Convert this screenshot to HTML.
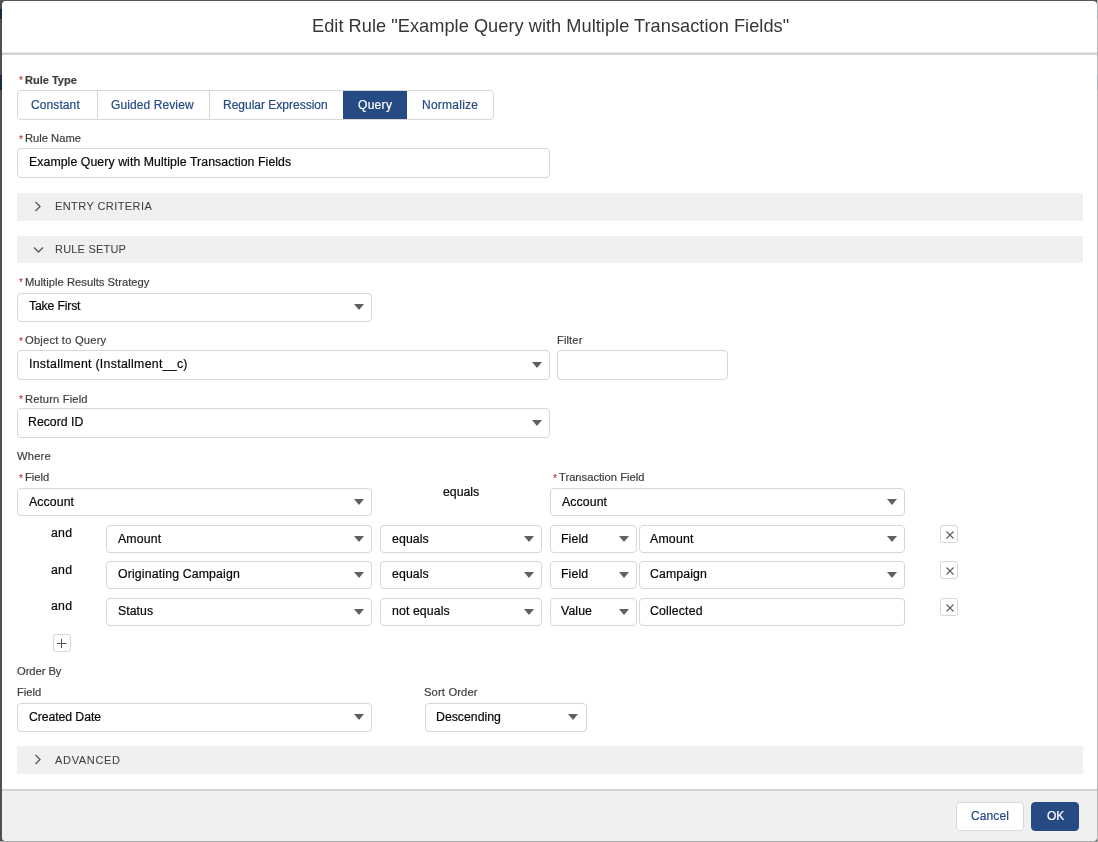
<!DOCTYPE html>
<html><head><meta charset="utf-8"><style>
html,body{margin:0;padding:0;width:1098px;height:842px;overflow:hidden;background:#555}
body{position:relative;font-family:"Liberation Sans",sans-serif}
.t{position:absolute;white-space:nowrap;line-height:1;will-change:transform;-webkit-text-stroke:0.2px currentColor}
</style></head><body>
<div style="position:absolute;left:0px;top:0px;width:1098px;height:842px;background:#555"></div>
<div style="position:absolute;left:0px;top:0px;width:2px;height:842px;background:#4f4f4f"></div>
<div style="position:absolute;left:0px;top:9px;width:2px;height:10px;background:#1c2b47"></div>
<div style="position:absolute;left:0px;top:75px;width:2px;height:15px;background:#1c2b47"></div>
<div style="position:absolute;left:1097px;top:0;width:1px;height:842px;background:#b9b9b9"></div>
<div style="position:absolute;left:1097px;top:9px;width:1px;height:10px;background:#a9b3c6"></div>
<div style="position:absolute;left:1097px;top:75px;width:1px;height:15px;background:#a9b3c6"></div>
<div style="position:absolute;left:0;top:841px;width:1098px;height:1px;background:#aaa"></div>
<div style="position:absolute;left:2px;top:1px;width:1095px;height:840px;background:#fff;border-radius:4px;overflow:hidden"><div style="position:absolute;left:0;top:51px;width:100%;height:1px;background:#e6e5e4"></div><div style="position:absolute;left:0;top:52px;width:100%;height:2px;background:#d6d4d2"></div><div style="position:absolute;left:0;top:788px;width:100%;height:52px;background:#f0f0f0;border-top:2px solid #d5d3d1;box-sizing:border-box"></div></div>
<div class="t" style="left:311.50px;top:16.89px;font-size:18.2px;color:#383634;font-weight:400;letter-spacing:0.04px;-webkit-text-stroke:0">Edit Rule "Example Query with Multiple Transaction Fields"</div>
<div class="t" style="left:18.90px;top:76.34px;font-size:10px;color:#b8302b;font-weight:400;letter-spacing:0px;-webkit-text-stroke:0.1px currentColor">*</div>
<div class="t" style="left:24.80px;top:75.09px;font-size:11px;color:#3e3e3c;font-weight:700;letter-spacing:0px;">Rule Type</div>
<div style="position:absolute;left:17px;top:90px;width:477px;height:30px;box-sizing:border-box;border:1px solid #d9d7d5;background:#fff;border-radius:4px;"></div>
<div style="position:absolute;left:343px;top:91px;width:64px;height:28px;background:#264b84"></div>
<div style="position:absolute;left:97px;top:91px;width:1px;height:28px;background:#d9d7d5"></div>
<div style="position:absolute;left:209px;top:91px;width:1px;height:28px;background:#d9d7d5"></div>
<div class="t" style="left:30.80px;top:98.84px;font-size:12px;color:#264b84;font-weight:400;letter-spacing:0.1px;">Constant</div>
<div class="t" style="left:110.70px;top:98.84px;font-size:12px;color:#264b84;font-weight:400;letter-spacing:0.1px;">Guided Review</div>
<div class="t" style="left:223.30px;top:98.84px;font-size:12px;color:#264b84;font-weight:400;letter-spacing:0px;">Regular Expression</div>
<div class="t" style="left:357.60px;top:98.84px;font-size:12px;color:#fff;font-weight:400;letter-spacing:0.3px;">Query</div>
<div class="t" style="left:421.50px;top:98.84px;font-size:12px;color:#264b84;font-weight:400;letter-spacing:0.25px;">Normalize</div>
<div class="t" style="left:18.90px;top:134.84px;font-size:10px;color:#b8302b;font-weight:400;letter-spacing:0px;-webkit-text-stroke:0.1px currentColor">*</div>
<div class="t" style="left:24.80px;top:133.42px;font-size:11.2px;color:#3e3e3c;font-weight:400;letter-spacing:0px;">Rule Name</div>
<div style="position:absolute;left:17px;top:148px;width:533px;height:30px;box-sizing:border-box;border:1px solid #d9d7d5;background:#fff;border-radius:4px;"></div>
<div class="t" style="left:29.00px;top:156.39px;font-size:12.3px;color:#080707;font-weight:400;letter-spacing:0.07px;">Example Query with Multiple Transaction Fields</div>
<div style="position:absolute;left:17px;top:193px;width:1066px;height:28px;background:#f0f0f0"></div>
<svg style="position:absolute;left:34px;top:201.0px" width="8" height="11" viewBox="0 0 8 11"><path d="M1.5 1L6 5.5L1.5 10" fill="none" stroke="#5c5c5c" stroke-width="1.4"/></svg>
<div class="t" style="left:54.80px;top:201.09px;font-size:11px;color:#3e3e3c;font-weight:400;letter-spacing:0.42px;-webkit-text-stroke:0.05px currentColor">ENTRY CRITERIA</div>
<div style="position:absolute;left:17px;top:236px;width:1066px;height:27px;background:#f0f0f0"></div>
<svg style="position:absolute;left:33px;top:245.5px" width="11" height="8" viewBox="0 0 11 8"><path d="M1 1.5L5.5 6L10 1.5" fill="none" stroke="#5c5c5c" stroke-width="1.4"/></svg>
<div class="t" style="left:54.80px;top:243.89px;font-size:11px;color:#3e3e3c;font-weight:400;letter-spacing:0.2px;-webkit-text-stroke:0.05px currentColor">RULE SETUP</div>
<div class="t" style="left:18.80px;top:278.04px;font-size:10px;color:#b8302b;font-weight:400;letter-spacing:0px;-webkit-text-stroke:0.1px currentColor">*</div>
<div class="t" style="left:24.70px;top:276.62px;font-size:11.2px;color:#3e3e3c;font-weight:400;letter-spacing:0.03px;">Multiple Results Strategy</div>
<div style="position:absolute;left:17px;top:293px;width:355px;height:29px;box-sizing:border-box;border:1px solid #d9d7d5;background:#fff;border-radius:4px;"></div>
<div class="t" style="left:28.60px;top:299.99px;font-size:12.3px;color:#080707;font-weight:400;letter-spacing:-0.2px;">Take First</div>
<svg style="position:absolute;left:353.6px;top:304.0px" width="10" height="6" viewBox="0 0 10 6"><path d="M0 0H10L5.0 6Z" fill="#606060"/></svg>
<div class="t" style="left:18.70px;top:336.54px;font-size:10px;color:#b8302b;font-weight:400;letter-spacing:0px;-webkit-text-stroke:0.1px currentColor">*</div>
<div class="t" style="left:24.60px;top:335.12px;font-size:11.2px;color:#3e3e3c;font-weight:400;letter-spacing:0.2px;">Object to Query</div>
<div style="position:absolute;left:17px;top:350px;width:533px;height:30px;box-sizing:border-box;border:1px solid #d9d7d5;background:#fff;border-radius:4px;"></div>
<div class="t" style="left:28.50px;top:357.89px;font-size:12.3px;color:#080707;font-weight:400;letter-spacing:0.3px;">Installment (Installment__c)</div>
<svg style="position:absolute;left:531.6px;top:361.5px" width="10" height="6" viewBox="0 0 10 6"><path d="M0 0H10L5.0 6Z" fill="#606060"/></svg>
<div class="t" style="left:557.00px;top:335.12px;font-size:11.2px;color:#3e3e3c;font-weight:400;letter-spacing:0.1px;">Filter</div>
<div style="position:absolute;left:557px;top:350px;width:171px;height:30px;box-sizing:border-box;border:1px solid #d9d7d5;background:#fff;border-radius:4px;"></div>
<div class="t" style="left:18.70px;top:395.04px;font-size:10px;color:#b8302b;font-weight:400;letter-spacing:0px;-webkit-text-stroke:0.1px currentColor">*</div>
<div class="t" style="left:24.60px;top:393.62px;font-size:11.2px;color:#3e3e3c;font-weight:400;letter-spacing:0.15px;">Return Field</div>
<div style="position:absolute;left:17px;top:408px;width:533px;height:30px;box-sizing:border-box;border:1px solid #d9d7d5;background:#fff;border-radius:4px;"></div>
<div class="t" style="left:27.80px;top:416.39px;font-size:12.3px;color:#080707;font-weight:400;letter-spacing:0px;">Record ID</div>
<svg style="position:absolute;left:531.6px;top:419.5px" width="10" height="6" viewBox="0 0 10 6"><path d="M0 0H10L5.0 6Z" fill="#606060"/></svg>
<div class="t" style="left:17.00px;top:450.82px;font-size:11.2px;color:#3e3e3c;font-weight:400;letter-spacing:0.2px;">Where</div>
<div class="t" style="left:18.70px;top:473.54px;font-size:10px;color:#b8302b;font-weight:400;letter-spacing:0px;-webkit-text-stroke:0.1px currentColor">*</div>
<div class="t" style="left:24.60px;top:472.12px;font-size:11.2px;color:#3e3e3c;font-weight:400;letter-spacing:0px;">Field</div>
<div style="position:absolute;left:17px;top:488px;width:355px;height:28px;box-sizing:border-box;border:1px solid #d9d7d5;background:#fff;border-radius:4px;"></div>
<div class="t" style="left:28.70px;top:495.89px;font-size:12.3px;color:#080707;font-weight:400;letter-spacing:0.1px;">Account</div>
<svg style="position:absolute;left:353.6px;top:498.5px" width="10" height="6" viewBox="0 0 10 6"><path d="M0 0H10L5.0 6Z" fill="#606060"/></svg>
<div class="t" style="left:443.00px;top:485.79px;font-size:12.3px;color:#080707;font-weight:400;letter-spacing:0px;">equals</div>
<div class="t" style="left:552.60px;top:473.63px;font-size:10px;color:#b8302b;font-weight:400;letter-spacing:0px;-webkit-text-stroke:0.1px currentColor">*</div>
<div class="t" style="left:558.50px;top:472.22px;font-size:11.2px;color:#3e3e3c;font-weight:400;letter-spacing:0px;">Transaction Field</div>
<div style="position:absolute;left:550px;top:488px;width:355px;height:28px;box-sizing:border-box;border:1px solid #d9d7d5;background:#fff;border-radius:4px;"></div>
<div class="t" style="left:561.70px;top:495.89px;font-size:12.3px;color:#080707;font-weight:400;letter-spacing:0.1px;">Account</div>
<svg style="position:absolute;left:886.6px;top:498.5px" width="10" height="6" viewBox="0 0 10 6"><path d="M0 0H10L5.0 6Z" fill="#606060"/></svg>
<div class="t" style="left:50.70px;top:527.19px;font-size:12.3px;color:#080707;font-weight:400;letter-spacing:0.25px;">and</div>
<div style="position:absolute;left:106px;top:525px;width:266px;height:28px;box-sizing:border-box;border:1px solid #d9d7d5;background:#fff;border-radius:4px;"></div>
<div class="t" style="left:117.70px;top:532.79px;font-size:12.3px;color:#080707;font-weight:400;letter-spacing:0.15px;">Amount</div>
<svg style="position:absolute;left:353.6px;top:535.5px" width="10" height="6" viewBox="0 0 10 6"><path d="M0 0H10L5.0 6Z" fill="#606060"/></svg>
<div style="position:absolute;left:380px;top:525px;width:162px;height:28px;box-sizing:border-box;border:1px solid #d9d7d5;background:#fff;border-radius:4px;"></div>
<div class="t" style="left:391.50px;top:532.79px;font-size:12.3px;color:#080707;font-weight:400;letter-spacing:0.1px;">equals</div>
<svg style="position:absolute;left:523.6px;top:535.5px" width="10" height="6" viewBox="0 0 10 6"><path d="M0 0H10L5.0 6Z" fill="#606060"/></svg>
<div style="position:absolute;left:550px;top:525px;width:87px;height:28px;box-sizing:border-box;border:1px solid #d9d7d5;background:#fff;border-radius:4px;"></div>
<div class="t" style="left:561.30px;top:532.79px;font-size:12.3px;color:#080707;font-weight:400;letter-spacing:0.1px;">Field</div>
<svg style="position:absolute;left:618.6px;top:535.5px" width="10" height="6" viewBox="0 0 10 6"><path d="M0 0H10L5.0 6Z" fill="#606060"/></svg>
<div style="position:absolute;left:639px;top:525px;width:266px;height:28px;box-sizing:border-box;border:1px solid #d9d7d5;background:#fff;border-radius:4px;"></div>
<div class="t" style="left:650.00px;top:532.79px;font-size:12.3px;color:#080707;font-weight:400;letter-spacing:0.2px;">Amount</div>
<svg style="position:absolute;left:886.6px;top:535.5px" width="10" height="6" viewBox="0 0 10 6"><path d="M0 0H10L5.0 6Z" fill="#606060"/></svg>
<div style="position:absolute;left:940px;top:525px;width:18px;height:18px;box-sizing:border-box;border:1px solid #d9d7d5;background:#fff;border-radius:3px;"></div>
<svg style="position:absolute;left:945.8px;top:530.6px" width="8" height="8" viewBox="0 0 8 8"><path d="M0.5 0.5L7.5 7.5M7.5 0.5L0.5 7.5" stroke="#5a5a5a" stroke-width="1.1"/></svg>
<div class="t" style="left:50.70px;top:563.59px;font-size:12.3px;color:#080707;font-weight:400;letter-spacing:0.25px;">and</div>
<div style="position:absolute;left:106px;top:561px;width:266px;height:28px;box-sizing:border-box;border:1px solid #d9d7d5;background:#fff;border-radius:4px;"></div>
<div class="t" style="left:117.70px;top:568.09px;font-size:12.3px;color:#080707;font-weight:400;letter-spacing:0.15px;">Originating Campaign</div>
<svg style="position:absolute;left:353.6px;top:571.5px" width="10" height="6" viewBox="0 0 10 6"><path d="M0 0H10L5.0 6Z" fill="#606060"/></svg>
<div style="position:absolute;left:380px;top:561px;width:162px;height:28px;box-sizing:border-box;border:1px solid #d9d7d5;background:#fff;border-radius:4px;"></div>
<div class="t" style="left:391.50px;top:568.09px;font-size:12.3px;color:#080707;font-weight:400;letter-spacing:0.1px;">equals</div>
<svg style="position:absolute;left:523.6px;top:571.5px" width="10" height="6" viewBox="0 0 10 6"><path d="M0 0H10L5.0 6Z" fill="#606060"/></svg>
<div style="position:absolute;left:550px;top:561px;width:87px;height:28px;box-sizing:border-box;border:1px solid #d9d7d5;background:#fff;border-radius:4px;"></div>
<div class="t" style="left:561.30px;top:568.09px;font-size:12.3px;color:#080707;font-weight:400;letter-spacing:0.1px;">Field</div>
<svg style="position:absolute;left:618.6px;top:571.5px" width="10" height="6" viewBox="0 0 10 6"><path d="M0 0H10L5.0 6Z" fill="#606060"/></svg>
<div style="position:absolute;left:639px;top:561px;width:266px;height:28px;box-sizing:border-box;border:1px solid #d9d7d5;background:#fff;border-radius:4px;"></div>
<div class="t" style="left:650.00px;top:568.09px;font-size:12.3px;color:#080707;font-weight:400;letter-spacing:0.1px;">Campaign</div>
<svg style="position:absolute;left:886.6px;top:571.5px" width="10" height="6" viewBox="0 0 10 6"><path d="M0 0H10L5.0 6Z" fill="#606060"/></svg>
<div style="position:absolute;left:940px;top:561px;width:18px;height:18px;box-sizing:border-box;border:1px solid #d9d7d5;background:#fff;border-radius:3px;"></div>
<svg style="position:absolute;left:945.8px;top:566.6px" width="8" height="8" viewBox="0 0 8 8"><path d="M0.5 0.5L7.5 7.5M7.5 0.5L0.5 7.5" stroke="#5a5a5a" stroke-width="1.1"/></svg>
<div class="t" style="left:50.70px;top:599.89px;font-size:12.3px;color:#080707;font-weight:400;letter-spacing:0.25px;">and</div>
<div style="position:absolute;left:106px;top:598px;width:266px;height:28px;box-sizing:border-box;border:1px solid #d9d7d5;background:#fff;border-radius:4px;"></div>
<div class="t" style="left:117.70px;top:604.89px;font-size:12.3px;color:#080707;font-weight:400;letter-spacing:0.05px;">Status</div>
<svg style="position:absolute;left:353.6px;top:608.5px" width="10" height="6" viewBox="0 0 10 6"><path d="M0 0H10L5.0 6Z" fill="#606060"/></svg>
<div style="position:absolute;left:380px;top:598px;width:162px;height:28px;box-sizing:border-box;border:1px solid #d9d7d5;background:#fff;border-radius:4px;"></div>
<div class="t" style="left:391.50px;top:604.89px;font-size:12.3px;color:#080707;font-weight:400;letter-spacing:0.1px;">not equals</div>
<svg style="position:absolute;left:523.6px;top:608.5px" width="10" height="6" viewBox="0 0 10 6"><path d="M0 0H10L5.0 6Z" fill="#606060"/></svg>
<div style="position:absolute;left:550px;top:598px;width:87px;height:28px;box-sizing:border-box;border:1px solid #d9d7d5;background:#fff;border-radius:4px;"></div>
<div class="t" style="left:561.30px;top:604.89px;font-size:12.3px;color:#080707;font-weight:400;letter-spacing:0.1px;">Value</div>
<svg style="position:absolute;left:618.6px;top:608.5px" width="10" height="6" viewBox="0 0 10 6"><path d="M0 0H10L5.0 6Z" fill="#606060"/></svg>
<div style="position:absolute;left:639px;top:598px;width:266px;height:28px;box-sizing:border-box;border:1px solid #d9d7d5;background:#fff;border-radius:4px;"></div>
<div class="t" style="left:650.00px;top:604.89px;font-size:12.3px;color:#080707;font-weight:400;letter-spacing:0.15px;">Collected</div>
<div style="position:absolute;left:940px;top:598px;width:18px;height:18px;box-sizing:border-box;border:1px solid #d9d7d5;background:#fff;border-radius:3px;"></div>
<svg style="position:absolute;left:945.8px;top:603.6px" width="8" height="8" viewBox="0 0 8 8"><path d="M0.5 0.5L7.5 7.5M7.5 0.5L0.5 7.5" stroke="#5a5a5a" stroke-width="1.1"/></svg>
<div style="position:absolute;left:53px;top:634px;width:18px;height:18px;box-sizing:border-box;border:1px solid #d9d7d5;background:#fff;border-radius:3px;"></div>
<svg style="position:absolute;left:57px;top:639px" width="10" height="10" viewBox="0 0 10 10"><path d="M4.5 0V9.2M0 4.5H9.5" stroke="#505050" stroke-width="1"/></svg>
<div class="t" style="left:17.00px;top:666.32px;font-size:11.2px;color:#3e3e3c;font-weight:400;letter-spacing:-0.05px;">Order By</div>
<div class="t" style="left:17.00px;top:686.92px;font-size:11.2px;color:#3e3e3c;font-weight:400;letter-spacing:0px;">Field</div>
<div style="position:absolute;left:17px;top:703px;width:355px;height:29px;box-sizing:border-box;border:1px solid #d9d7d5;background:#fff;border-radius:4px;"></div>
<div class="t" style="left:28.60px;top:710.79px;font-size:12.3px;color:#080707;font-weight:400;letter-spacing:-0.1px;">Created Date</div>
<svg style="position:absolute;left:353.6px;top:714.0px" width="10" height="6" viewBox="0 0 10 6"><path d="M0 0H10L5.0 6Z" fill="#606060"/></svg>
<div class="t" style="left:424.00px;top:686.92px;font-size:11.2px;color:#3e3e3c;font-weight:400;letter-spacing:0.15px;">Sort Order</div>
<div style="position:absolute;left:425px;top:703px;width:162px;height:29px;box-sizing:border-box;border:1px solid #d9d7d5;background:#fff;border-radius:4px;"></div>
<div class="t" style="left:436.00px;top:710.79px;font-size:12.3px;color:#080707;font-weight:400;letter-spacing:0px;">Descending</div>
<svg style="position:absolute;left:567.6px;top:714.0px" width="10" height="6" viewBox="0 0 10 6"><path d="M0 0H10L5.0 6Z" fill="#606060"/></svg>
<div style="position:absolute;left:17px;top:746px;width:1066px;height:28px;background:#f0f0f0"></div>
<svg style="position:absolute;left:34px;top:754.0px" width="8" height="11" viewBox="0 0 8 11"><path d="M1.5 1L6 5.5L1.5 10" fill="none" stroke="#5c5c5c" stroke-width="1.4"/></svg>
<div class="t" style="left:54.80px;top:755.09px;font-size:11px;color:#3e3e3c;font-weight:400;letter-spacing:0.68px;-webkit-text-stroke:0.05px currentColor">ADVANCED</div>
<div style="position:absolute;left:956px;top:802px;width:68px;height:29px;box-sizing:border-box;border:1px solid #dddbda;background:#fff;border-radius:4px;"></div>
<div class="t" style="left:970.70px;top:810.14px;font-size:12px;color:#264b84;font-weight:400;letter-spacing:0.1px;">Cancel</div>
<div style="position:absolute;left:1031px;top:802px;width:48px;height:29px;box-sizing:border-box;border:1px solid #264b84;background:#264b84;border-radius:4px;"></div>
<div class="t" style="left:1046.50px;top:810.14px;font-size:12px;color:#fff;font-weight:400;letter-spacing:0px;">OK</div>
</body></html>
